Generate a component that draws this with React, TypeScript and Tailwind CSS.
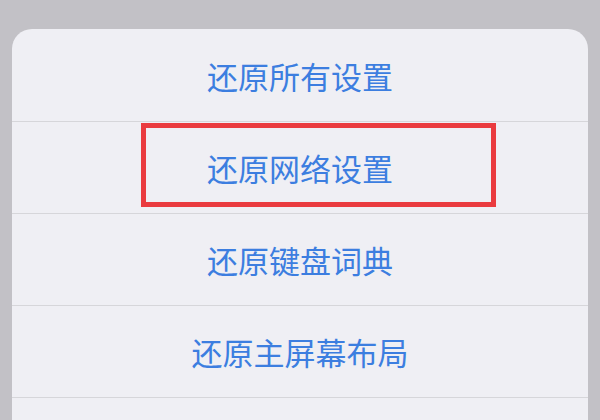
import React from "react";

const items = ["还原所有设置", "还原网络设置", "还原键盘词典", "还原主屏幕布局", ""];

export default function App() {
  return (
    <div className="relative h-[420px] w-[600px] overflow-hidden bg-[#c2c1c6] pt-[29px] px-[12px]" style={{ fontFamily: '"Noto Sans CJK SC", "Noto Sans", sans-serif' }}>
      <div className="h-[420px] rounded-t-[20px] bg-[#efeff4]">
        {items.map((t, i) => (
          <div
            key={i}
            className={`flex items-center justify-center text-[31px] leading-none text-[#3c7ee0] ${i === 0 ? "h-[93px]" : "h-[92px]"} ${i < items.length - 1 ? "border-b border-[#d6d6da]" : ""}`}
          >
            {t}
          </div>
        ))}
      </div>
      <div className="absolute left-[141px] top-[123px] h-[84px] w-[355px] border-[5px] border-[#ea3b3f]" />
    </div>
  );
}
